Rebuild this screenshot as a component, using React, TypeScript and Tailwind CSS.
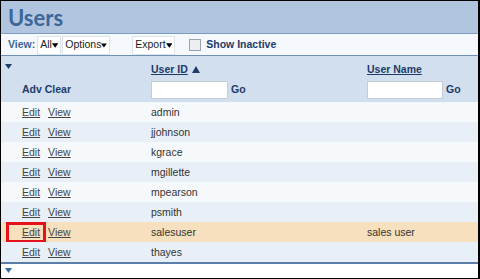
import React from 'react';

const users = [
  { id: 'admin', name: '' },
  { id: 'jjohnson', name: '' },
  { id: 'kgrace', name: '' },
  { id: 'mgillette', name: '' },
  { id: 'mpearson', name: '' },
  { id: 'psmith', name: '' },
  { id: 'salesuser', name: 'sales user', selected: true },
  { id: 'thayes', name: '' },
];

function Caret({ className = '' }: { className?: string }) {
  return (
    <svg width="7" height="5" viewBox="0 0 7 5" className={className}>
      <polygon points="0,0 7,0 3.5,5" fill="currentColor" />
    </svg>
  );
}

function Dropdown({ label, width }: { label: string; width: string }) {
  return (
    <div className={`${width} h-[19px] bg-white border border-[#dfe4ea] flex items-center justify-between pl-[2px] pr-[2px] text-[#222]`}>
      <span>{label}</span>
      <Caret className="text-black" />
    </div>
  );
}

export default function App() {
  return (
    <div
      className="w-[480px] h-[279px] overflow-hidden border-l border-t border-r-2 border-b border-black bg-white text-[10.5px]"
      style={{ fontFamily: '"Liberation Sans", Arial, sans-serif' }}
    >
      <div className="h-[33px] bg-[#b2c5df] border-b border-[#7e9dc3] flex items-center pl-[7px]">
        <span className="text-[22px] font-bold text-[#3d6699] pt-[1px]" style={{ fontFamily: 'Lato, sans-serif' }}>
          Users
        </span>
      </div>

      <div className="h-[22px] bg-[#f5f9fd] border-b border-[#6f90b8] flex items-center pl-[7px] pt-[1px]">
        <span className="font-bold text-[#3d6699] mr-[2px]">View:</span>
        <Dropdown label="All" width="w-[24px]" />
        <Dropdown label="Options" width="w-[48px] ml-[1px]" />
        <Dropdown label="Export" width="w-[43px] ml-[22px]" />
        <div className="w-[12px] h-[12px] ml-[14px] border border-[#9aa3ad] bg-[#eceef1]" />
        <span className="ml-[5px] font-bold text-[#1d3c6a]">Show Inactive</span>
      </div>

      <div className="h-[22px] bg-[#d2dfee] grid grid-cols-[150px_216px_1fr] items-center">
        <div className="pl-[4px] text-[#1d3c6a] pb-[2px]">
          <Caret className="w-[7px] h-[7px]" />
        </div>
        <div className="flex items-center gap-[4px] font-bold text-[#1d3c6a] pt-[5px]">
          <span className="underline">User ID</span>
          <svg width="8" height="7" viewBox="0 0 8 7">
            <polygon points="4,0 8,7 0,7" fill="currentColor" />
          </svg>
        </div>
        <div className="font-bold text-[#1d3c6a] underline pt-[5px]">User Name </div>
      </div>

      <div className="h-[24px] bg-[#d2dfee] grid grid-cols-[150px_216px_1fr] items-center">
        <div className="pl-[21px] font-bold text-[#1d3c6a]">Adv Clear</div>
        <div className="flex items-center gap-[3px]">
          <div className="w-[77px] h-[18px] bg-white border border-[#c4ccd6]" />
          <span className="font-bold text-[#1d3c6a]">Go</span>
        </div>
        <div className="flex items-center gap-[3px]">
          <div className="w-[76px] h-[18px] bg-white border border-[#c4ccd6]" />
          <span className="font-bold text-[#1d3c6a]">Go</span>
        </div>
      </div>

      {users.map((u, i) => (
        <div
          key={u.id}
          className={`relative h-[20px] grid grid-cols-[150px_216px_1fr] items-center pt-[2px] text-[#333] ${
            u.selected ? 'bg-[#f7e0bd]' : i % 2 === 0 ? 'bg-[#f6f9fc]' : 'bg-[#e9eff7]'
          }`}
        >
          <div className="pl-[21px] flex gap-[8px] text-[#444]">
            <span className="underline">Edit</span>
            <span className="underline">View</span>
          </div>
          <div>{u.id}</div>
          <div>{u.name}</div>
          {u.selected && (
            <div className="absolute left-[5px] top-0 w-[40px] h-[21px] border-[3px] border-[#e5121c]" />
          )}
        </div>
      ))}

      <div className="h-[2px] bg-[#5b7ea8]" />
      <div className="h-[13px] bg-white pl-[4px] flex items-center text-[#3a6aa0]">
        <Caret className="w-[7px] h-[7px]" />
      </div>
    </div>
  );
}
